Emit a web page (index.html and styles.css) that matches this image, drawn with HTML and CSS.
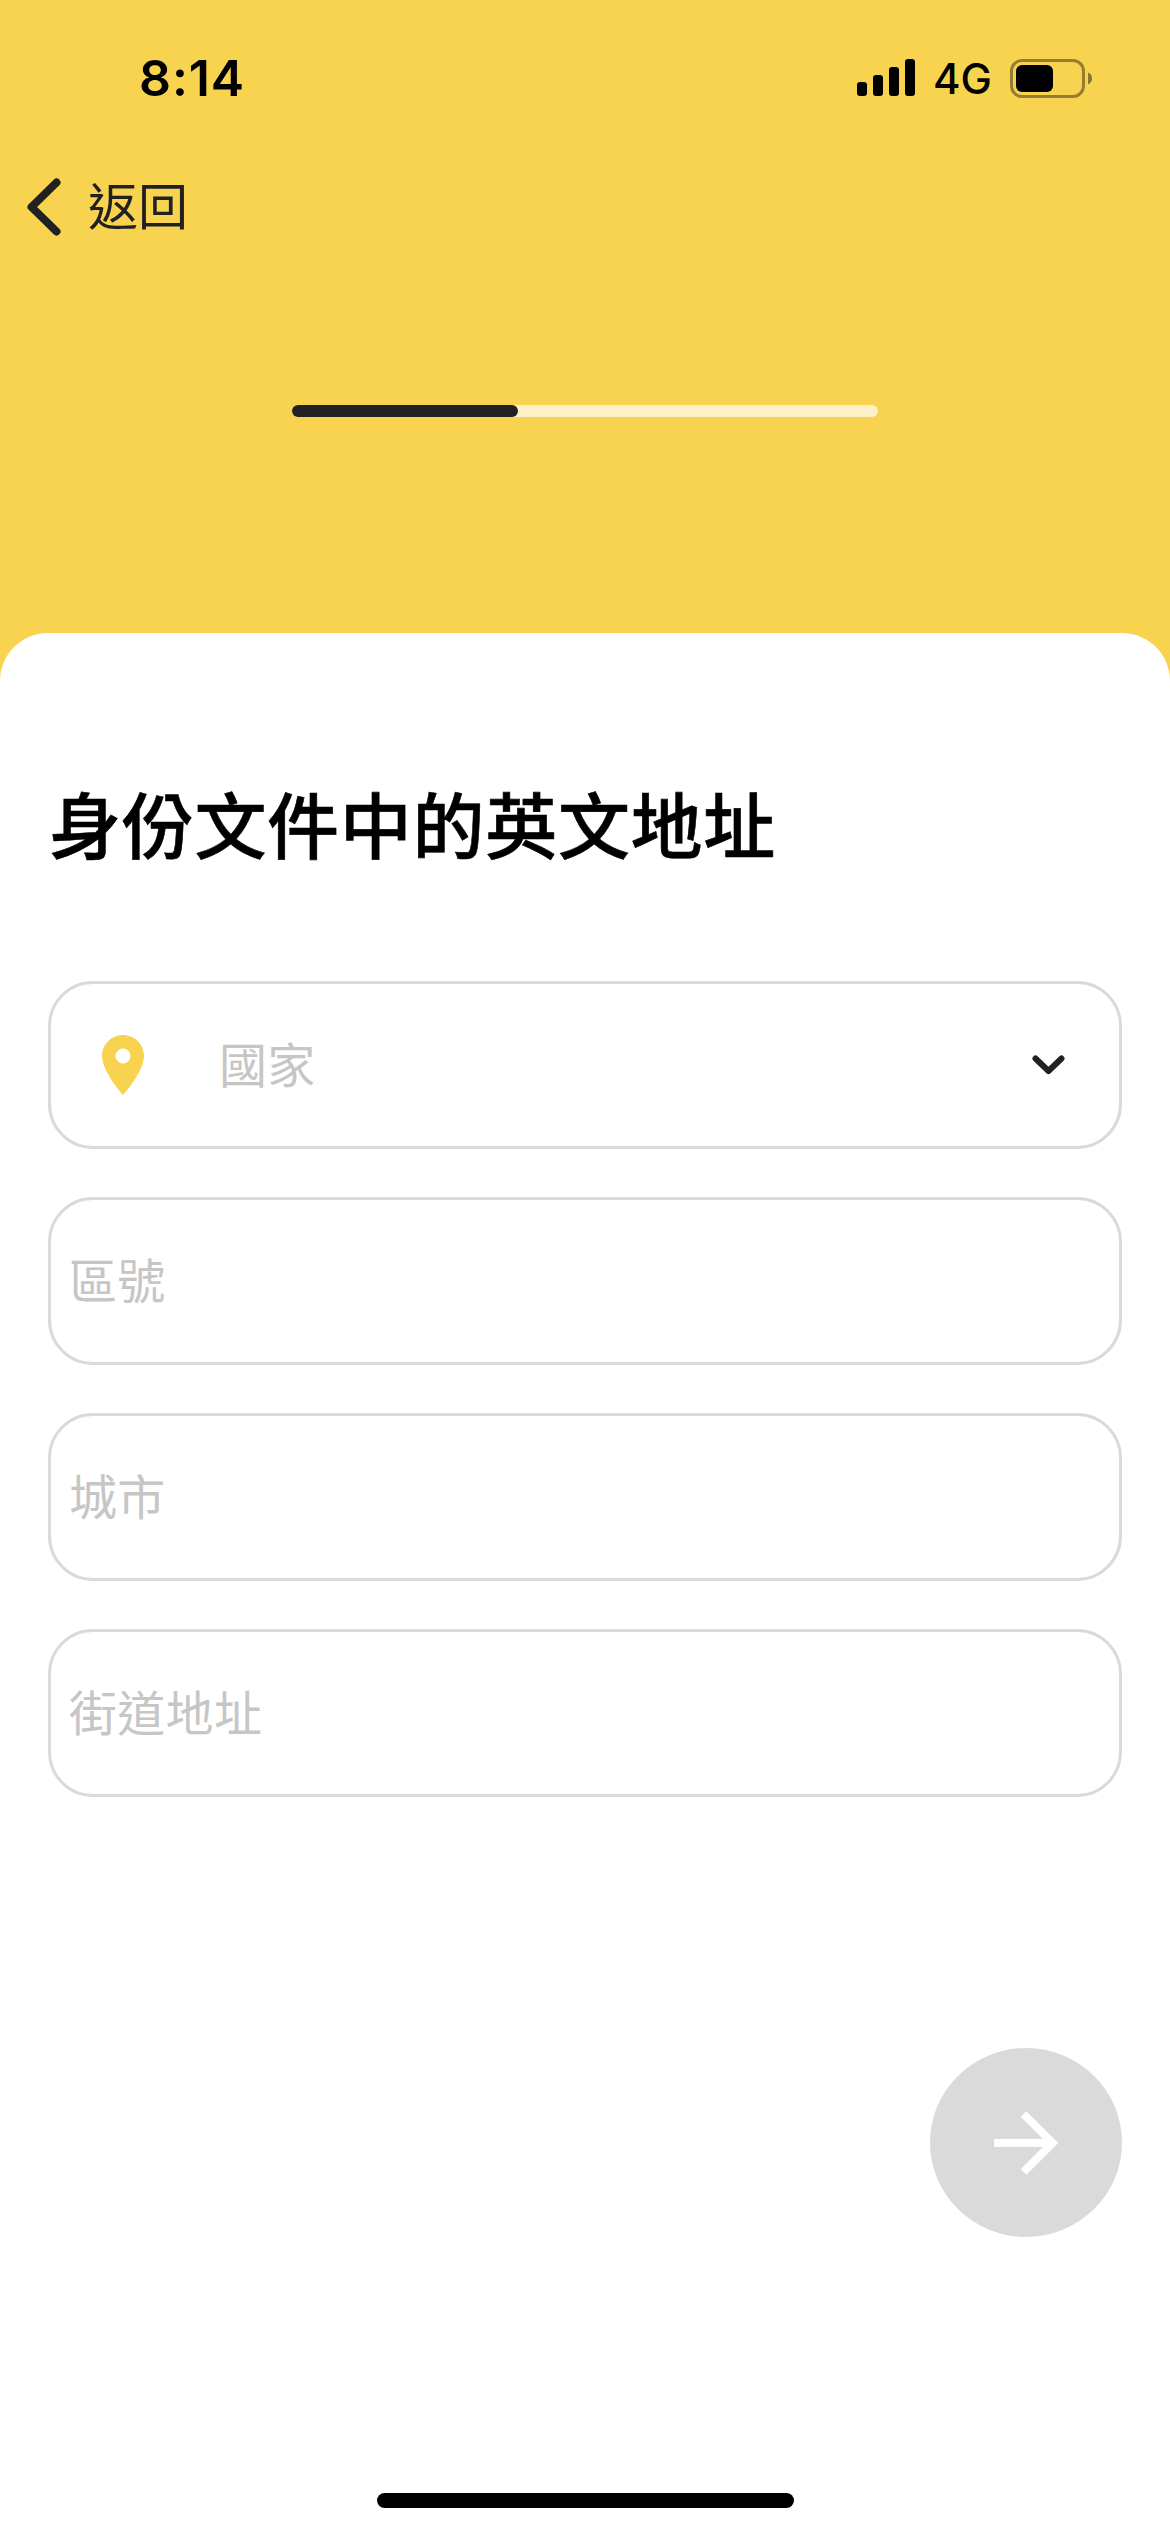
FILE: index.html
```html
<!DOCTYPE html>
<html lang="zh-Hant">
<head>
<meta charset="utf-8">
<title>身份文件中的英文地址</title>
<link rel="stylesheet" href="styles.css">
</head>
<body>
<div class="screen">
  <header class="status-bar">
    <span class="clock">8:14</span>
    <div class="indicators">
      <svg class="signal" width="58" height="38" viewBox="0 0 58 38">
        <rect x="0" y="23" width="10" height="14" rx="3"/>
        <rect x="16" y="16" width="10" height="21" rx="3"/>
        <rect x="32" y="8" width="10" height="29" rx="3"/>
        <rect x="48" y="0" width="10" height="37" rx="3"/>
      </svg>
      <span class="network">4G</span>
      <svg class="battery" width="82" height="39" viewBox="0 0 82 39">
        <rect x="1.5" y="1.5" width="72" height="36" rx="10.5" fill="none" stroke="#000" stroke-opacity=".4" stroke-width="3"/>
        <rect x="6" y="6" width="37" height="27" rx="6"/>
        <path d="M78 13.5c2.500 1 4 3.300 4 6s-1.500 5-4 6z" fill-opacity=".45"/>
      </svg>
    </div>
  </header>
  <nav class="nav">
    <svg class="back-icon" width="34" height="58" viewBox="0 0 34 58">
      <path d="M29.500 4.500 4.500 29 29.500 53.500" fill="none" stroke="#212121" stroke-width="8" stroke-linecap="round" stroke-linejoin="round"/>
    </svg>
    <span class="back-label">返回</span>
  </nav>
  <div class="progress"><div class="progress-value"></div></div>
  <main class="sheet">
    <h1 class="title">身份文件中的英文地址</h1>
    <form class="fields">
      <div class="field country">
        <svg class="pin" width="42" height="60" viewBox="0 0 42 60">
          <path fill="#f8d350" fill-rule="evenodd" d="M21 0C9.400 0 0 9.400 0 21c0 15.750 21 39 21 39s21-23.250 21-39C42 9.400 32.600 0 21 0zm0 28.500a7.500 7.500 0 1 1 0-15 7.500 7.500 0 0 1 0 15z"/>
        </svg>
        <span class="placeholder">國家</span>
        <svg class="chevron" width="33" height="20" viewBox="0 0 33 20">
          <path d="M3.500 3.500 16.500 16 29.500 3.500" fill="none" stroke="#212121" stroke-width="6" stroke-linecap="round" stroke-linejoin="round"/>
        </svg>
      </div>
      <div class="field"><span class="placeholder">區號</span></div>
      <div class="field"><span class="placeholder">城市</span></div>
      <div class="field"><span class="placeholder">街道地址</span></div>
    </form>
    <button class="next" type="button">
      <svg width="64" height="64" viewBox="0 0 64 64">
        <path d="M0 32H58M29.500 3 58.500 32 29.500 61" fill="none" stroke="#fff" stroke-width="8"/>
      </svg>
    </button>
    <div class="home-indicator"></div>
  </main>
</div>
</body>
</html>
```
FILE: styles.css
```css
* { box-sizing: border-box; }

body {
  margin: 0;
  background: #f8d350;
  font-family: "Noto Sans CJK TC", sans-serif;
}

.screen {
  display: flex;
  flex-direction: column;
  width: 1170px;
  height: 2532px;
  overflow: hidden;
}

.status-bar {
  display: flex;
  justify-content: space-between;
  height: 141px;
  padding: 48px 78px 0 139px;
  font-family: Inter, sans-serif;
  color: #000;
}

.clock {
  height: 60px;
  font-size: 50px;
  font-weight: 600;
  line-height: 60px;
  letter-spacing: .9px;
}

.indicators {
  display: flex;
  align-items: center;
  height: 60px;
}

.network {
  width: 58px;
  margin: 2px 19px 0 18px;
  font-size: 42px;
  font-weight: 450;
  line-height: 60px;
}

.nav {
  display: flex;
  align-items: center;
  height: 132px;
  padding-left: 27px;
}

.back-label {
  margin-left: 27px;
  padding-bottom: 8px;
  color: #212121;
  font-size: 50px;
  line-height: 60px;
}

.progress {
  width: 586px;
  height: 12px;
  margin: 132px auto 0;
  border-radius: 6px;
  background: #fbf0c8;
}

.progress-value {
  width: 226px;
  height: 12px;
  border-radius: 6px;
  background: #212121;
}

.sheet {
  display: flex;
  flex: 1;
  flex-direction: column;
  margin-top: 216px;
  padding: 139px 48px 0;
  border-radius: 48px 48px 0 0;
  background: #fff;
}

.title {
  margin: 0 0 0 1px;
  color: #000;
  font-size: 72px;
  font-weight: 500;
  line-height: 100px;
  letter-spacing: .7px;
  -webkit-text-stroke: .6px #000;
}

.fields {
  display: flex;
  flex-direction: column;
  gap: 48px;
  margin-top: 109px;
}

.field {
  display: flex;
  align-items: center;
  height: 168px;
  padding: 0 18px;
  border: 3px solid #dadada;
  border-radius: 45px;
}

.country { padding: 0 54px 0 51px; }

.placeholder {
  padding-bottom: 7px;
  color: #c6c6c6;
  font-size: 48px;
  line-height: 60px;
  letter-spacing: .3px;
}

.country .placeholder {
  flex: 1;
  margin-left: 75px;
}

.next {
  display: flex;
  align-items: center;
  align-self: flex-end;
  justify-content: center;
  width: 192px;
  height: 189px;
  margin-top: 251px;
  padding: 0;
  border: 0;
  border-radius: 50%;
  background: #dadada;
}

.home-indicator {
  width: 417px;
  height: 15px;
  margin: auto auto 24px;
  border-radius: 8px;
  background: #000;
}
```
